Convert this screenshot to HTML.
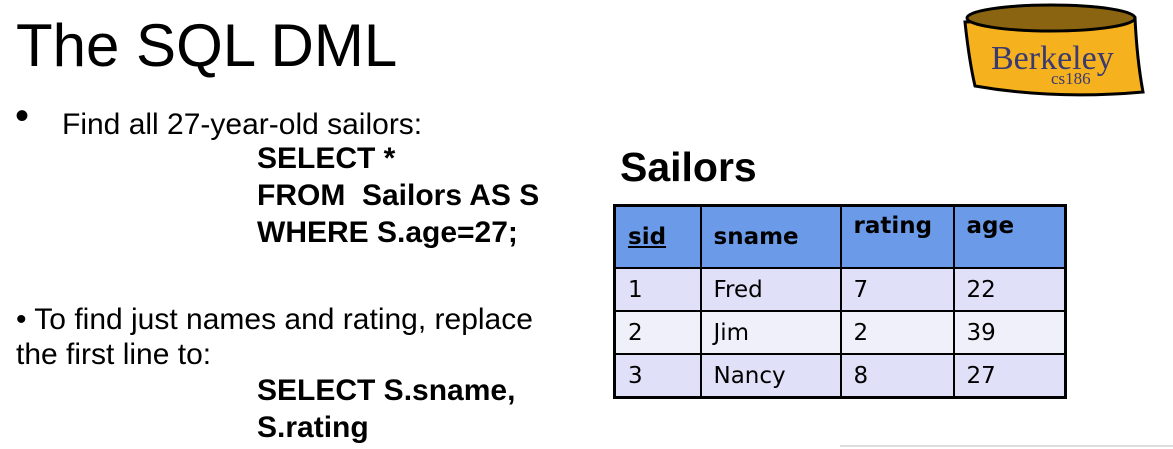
<!DOCTYPE html>
<html><head><style>
body{margin:0;width:1173px;height:449px;background:#fff;position:relative;overflow:hidden;font-family:"Liberation Sans",Arial,sans-serif;color:#000}
.a{position:absolute;white-space:nowrap}
.b{font-weight:bold}
table{position:absolute;left:613px;top:204px;border-collapse:collapse;border:3px solid #000;font-family:"DejaVu Sans","Liberation Sans",sans-serif;font-size:23px}
td{border:2px solid #000;padding:0 0 0 12px;vertical-align:middle}
tr.h td{background:#6b9be8;font-weight:bold;height:54px}
tr.r1 td{background:#e0e0f8;height:41px}
tr.r2 td{background:#f0f0fb;height:41px}
</style></head><body>
<div class="a" style="left:16px;top:11px;font-size:60px;">The SQL DML</div>
<div class="a" style="left:15px;top:94px;font-size:40px;">•</div>
<div class="a" style="left:62px;top:108px;font-size:30px;">Find all 27-year-old sailors:</div>
<div class="a b" style="left:257px;top:140px;font-size:30px;line-height:37px">SELECT *<br>FROM&nbsp; Sailors AS S<br>WHERE S.age=27;</div>
<div class="a" style="left:16px;top:302px;font-size:30px;line-height:35px">• To find just names and rating, replace<br>the first line to:</div>
<div class="a b" style="left:257px;top:372px;font-size:30px;line-height:37px">SELECT S.sname,<br>S.rating</div>
<div class="a b" style="left:620px;top:144px;font-size:41px;">Sailors</div>
<table>
<col style="width:86px"><col style="width:140px"><col style="width:113px"><col style="width:112px">
<tr class="h"><td><u>sid</u></td><td>sname</td><td style="vertical-align:top;padding-top:6px">rating</td><td style="vertical-align:top;padding-top:6px">age</td></tr>
<tr class="r1"><td>1</td><td>Fred</td><td>7</td><td>22</td></tr>
<tr class="r2"><td>2</td><td>Jim</td><td>2</td><td>39</td></tr>
<tr class="r1"><td>3</td><td>Nancy</td><td>8</td><td>27</td></tr>
</table>
<div class="a" style="left:840px;top:445px;width:333px;height:2px;background:#ddd"></div>
<svg class="a" style="left:955px;top:0" width="200" height="105" viewBox="0 0 200 105">
<path d="M10 22 Q14 60 20 86 Q100 100 188 92 Q182 60 180 18 Z" fill="#f6b21e" stroke="#000" stroke-width="3"/>
<ellipse cx="96" cy="18" rx="84" ry="13" fill="#8a6410" stroke="#000" stroke-width="3"/>
<text x="36" y="69" font-family="Liberation Serif,serif" font-size="34" fill="#3a3a70">Berkeley</text>
<text x="96" y="84" font-family="Liberation Serif,serif" font-size="17" fill="#3a3a70">cs186</text>
</svg>
</body></html>
